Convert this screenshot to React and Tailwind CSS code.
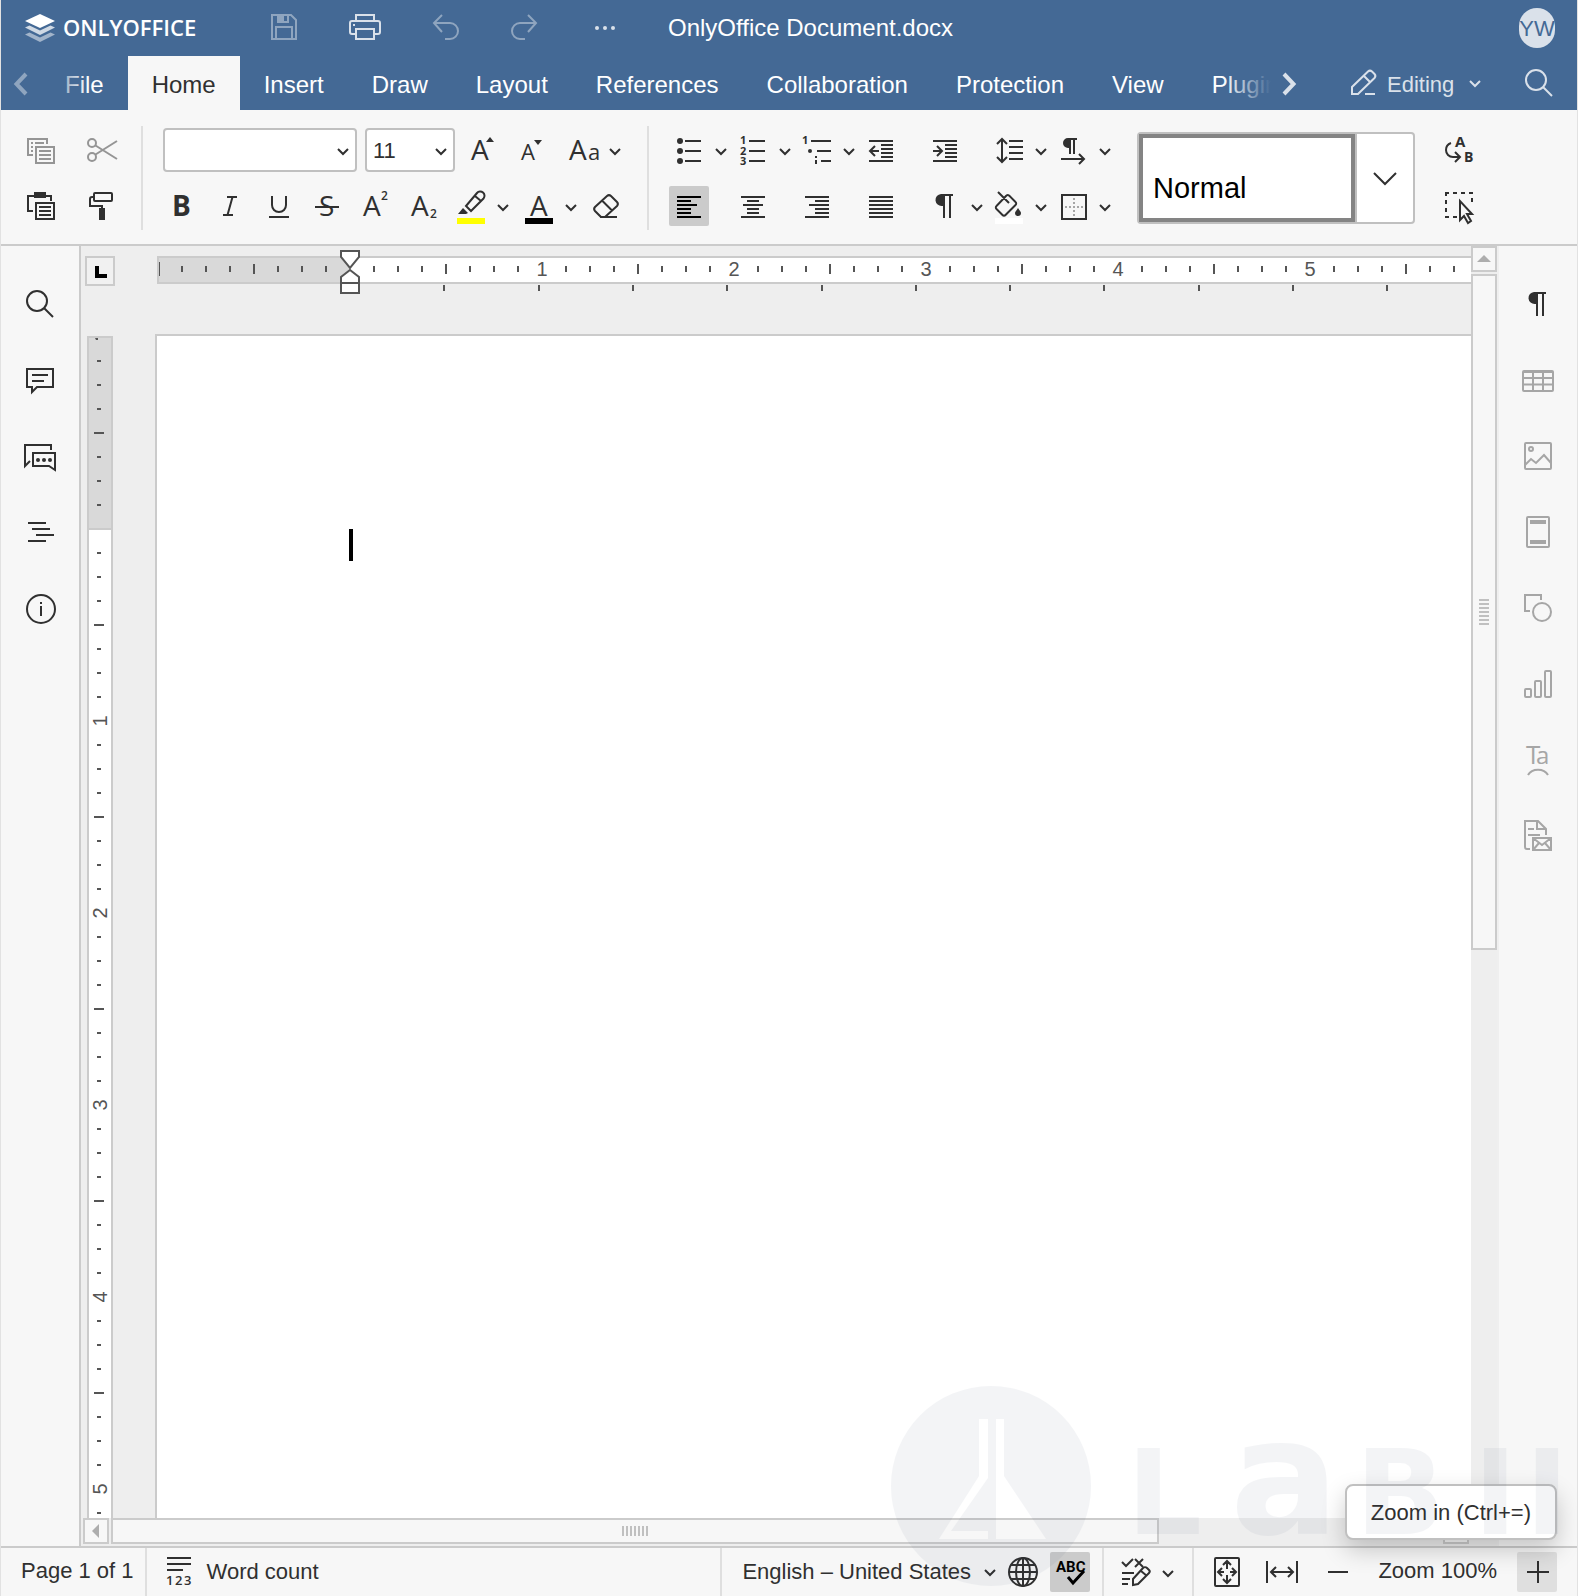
import React from "react";

const Icon = ({ children, className = "" }) => (
  <svg
    viewBox="0 0 40 40"
    className={`size-10 shrink-0 ${className}`}
    fill="none"
    stroke="currentColor"
    strokeWidth="2"
    aria-hidden="true"
  >
    {children}
  </svg>
);

const Glyph = ({ x, y, size, weight = 400, children }) => (
  <text
    x={x}
    y={y}
    fontSize={size}
    fontWeight={weight}
    fontFamily="'Open Sans', sans-serif"
    fill="currentColor"
    stroke="none"
  >
    {children}
  </text>
);

const Caret = ({ className = "" }) => (
  <svg
    viewBox="0 0 24 40"
    className={`h-10 w-6 shrink-0 ${className}`}
    fill="none"
    stroke="currentColor"
    strokeWidth="2"
    aria-hidden="true"
  >
    <path d="M7 19l5 5 5-5" />
  </svg>
);

const ToolButton = ({ label, children, caret, className = "" }) => (
  <button aria-label={label} className={`flex items-center ${className}`}>
    <Icon>{children}</Icon>
    {caret && <Caret />}
  </button>
);

const Lines = ({ rows }) => (
  <path d={rows.map(([x1, x2, y]) => `M${x1} ${y}H${x2}`).join("")} />
);

const Pilcrow = () => (
  <path
    d="M17 8h11v2h-2v22h-2V10h-4v22h-2V20h-1a6 6 0 0 1-1-12z"
    fill="currentColor"
    stroke="none"
  />
);

const SearchShape = () => (
  <>
    <circle cx="17" cy="17" r="10" />
    <path d="M24 24l9 9" />
  </>
);

const tabs = [
  "File",
  "Home",
  "Insert",
  "Draw",
  "Layout",
  "References",
  "Collaboration",
  "Protection",
  "View",
  "Plugins",
];

const Header = () => (
  <header className="bg-[#446995] text-white">
    <div className="flex h-14 items-center">
      <a href="#" className="flex w-[263px] shrink-0 items-center gap-2 pl-6">
        <svg viewBox="0 0 30 28" className="h-7 w-[30px]" aria-hidden="true">
          <path d="M0 20.500l4.500-2L15 23.500l10.500-5 4.500 2L15 28z" fill="#fff" opacity=".5" />
          <path d="M0 13.500l4.500-2L15 16.500l10.500-5 4.500 2L15 21z" fill="#fff" opacity=".75" />
          <path d="M15 0l15 7-15 7L0 7z" fill="#fff" />
        </svg>
        <span className="pb-0.5 font-['Open_Sans'] text-[22px] font-semibold">ONLYOFFICE</span>
      </a>
      <div className="flex items-center gap-10">
        <ToolButton label="Save" className="text-[#8fa5bf]">
          <path d="M8 7h19l5 5v19H8zM12 31V19h16v12M14 7v7h10V7" />
          <path d="M14 7h5v7h-5z" fill="currentColor" />
        </ToolButton>
        <ToolButton label="Print" className="text-[#dae1ea]">
          <path d="M12 13V7h18v6M12 26H8a2 2 0 0 1-2-2V15a2 2 0 0 1 2-2h26a2 2 0 0 1 2 2v9a2 2 0 0 1-2 2h-4" />
          <path d="M12 21h18v10H12zM9 17h2" />
        </ToolButton>
        <ToolButton label="Undo" className="text-[#8fa5bf]">
          <path d="M18 7l-8 8 8 9M10 15h16a8 8 0 0 1 0 16h-5" />
        </ToolButton>
        <ToolButton label="Redo" className="text-[#8fa5bf]">
          <path d="M24 7l8 8-8 9M32 15H16a8 8 0 0 0 0 16h5" />
        </ToolButton>
        <ToolButton label="More" className="text-[#dae1ea]">
          <g fill="currentColor" stroke="none">
            <circle cx="13" cy="20" r="2" />
            <circle cx="21" cy="20" r="2" />
            <circle cx="29" cy="20" r="2" />
          </g>
        </ToolButton>
      </div>
      <h1 className="ml-11 flex-1 text-2xl">OnlyOffice Document.docx</h1>
      <button className="mr-5.5 flex h-10 w-9 items-center justify-center rounded-full bg-[#dae1ea] text-[22px] text-[#446995]">
        YW
      </button>
    </div>

    <div className="flex h-[54px] items-center">
      <button aria-label="Scroll tabs left" className="text-[#8fa5bf]">
        <Icon>
          <path d="M25 11L15.500 21l9.500 10" strokeWidth="4" />
        </Icon>
      </button>
      <nav className="relative flex h-full flex-1 overflow-hidden">
        {tabs.map((tab) => (
          <a
            key={tab}
            href="#"
            className={`flex h-full shrink-0 items-center px-6 pt-1 text-2xl ${
              tab === "Home" ? "bg-[#f7f7f7] text-[#303030]" : ""
            }`}
          >
            {tab}
          </a>
        ))}
        <div className="absolute inset-y-0 left-0 w-12 bg-linear-to-r from-[#446995] to-transparent" />
        <div className="absolute inset-y-0 right-0 w-12 bg-linear-to-l from-[#446995] to-transparent" />
      </nav>
      <button aria-label="Scroll tabs right" className="text-[#dae1ea]">
        <Icon>
          <path d="M13 11l9.500 10L13 31" strokeWidth="4" />
        </Icon>
      </button>
      <div className="ml-8 flex items-center gap-1 text-[#dae1ea]">
        <Icon>
          <path d="M9 31v-7L25 8.500a3 3 0 0 1 4 0l2.500 2.500a3 3 0 0 1 0 4L15 31zM21 13l6 6M22 31h10" />
        </Icon>
        <div className="relative w-25">
          <select
            aria-label="Editing mode"
            className="w-full appearance-none bg-transparent pt-0.5 text-[22px]"
          >
            <option>Editing</option>
          </select>
          <Caret className="pointer-events-none absolute -top-1 right-0" />
        </div>
      </div>
      <button aria-label="Search" className="mr-4.5 ml-8 text-[#dae1ea]">
        <Icon>
          <SearchShape />
        </Icon>
      </button>
    </div>
  </header>
);

const Separator = () => <div className="h-26 w-0.5 shrink-0 bg-[#dfdfdf]" />;

const Combo = ({ label, value, className }) => (
  <div className={`relative ${className}`}>
    <select
      aria-label={label}
      className="h-11 w-full appearance-none rounded-sm border-2 border-[#c0c0c0] bg-white px-1.5 text-[22px]"
    >
      <option>{value}</option>
    </select>
    <Caret className="pointer-events-none absolute top-0.5 right-0.5" />
  </div>
);

const Toolbar = () => (
  <div className="flex items-center gap-5 border-b-2 border-[#cbcbcb] pt-4 pb-3.5 pl-5">
    <div className="grid grid-cols-2 gap-x-5 gap-y-4">
      <ToolButton label="Copy" className="text-[#959595]">
        <path d="M12 25H7V9h19v5M15 17h18v16H15z" />
        <Lines rows={[[10, 12, 13], [14, 23, 13], [10, 12, 17], [10, 12, 21], [18, 30, 21], [18, 30, 25], [18, 30, 29]]} />
      </ToolButton>
      <ToolButton label="Cut" className="text-[#959595]">
        <circle cx="11" cy="13" r="4" />
        <circle cx="11" cy="27" r="4" />
        <path d="M14.500 15.500L36 29M14.500 24.500L36 11" />
      </ToolButton>
      <ToolButton label="Paste">
        <path d="M12 25H7V10h23v5M15 17h18v16H15z" />
        <path d="M13 6h12v6H13z" fill="currentColor" stroke="none" />
        <Lines rows={[[18, 30, 21], [18, 30, 25], [18, 30, 29]]} />
      </ToolButton>
      <ToolButton label="Copy style">
        <rect x="13" y="7" width="18" height="8" rx="1" />
        <path d="M13 11h-2a2 2 0 0 0-2 2v7h12v3" />
        <path d="M18 22h6v12h-6z" fill="currentColor" stroke="none" />
      </ToolButton>
    </div>
    <Separator />
    <div className="flex flex-col gap-4">
      <div className="flex h-10 items-center gap-2">
        <Combo label="Font" value="" className="w-[194px]" />
        <Combo label="Font size" value="11" className="w-[90px]" />
        <ToolButton label="Increment font size">
          <Glyph x="8" y="30" size="28">A</Glyph>
          <path d="M23 12h8l-4-5z" fill="currentColor" stroke="none" />
        </ToolButton>
        <ToolButton label="Decrement font size">
          <Glyph x="10" y="30" size="22">A</Glyph>
          <path d="M23 10h8l-4 5z" fill="currentColor" stroke="none" />
        </ToolButton>
        <ToolButton label="Change case" caret className="ml-1">
          <Glyph x="6" y="30" size="28">A</Glyph>
          <Glyph x="25" y="30" size="22">a</Glyph>
        </ToolButton>
      </div>
      <div className="flex gap-1">
        <div className="mr-1 flex gap-2">
          <ToolButton label="Bold">
            <Glyph x="9" y="30" size="28" weight={700}>B</Glyph>
          </ToolButton>
          <ToolButton label="Italic">
            <path d="M16 11h10M12 29h10M21.500 11l-5 18" />
          </ToolButton>
          <ToolButton label="Underline">
            <path d="M13 10v9c0 4 3 7 7 7s7-3 7-7v-9M10 31h20" />
          </ToolButton>
          <ToolButton label="Strikethrough">
            <Glyph x="12" y="30" size="28">S</Glyph>
            <path d="M8 21h24" />
          </ToolButton>
          <ToolButton label="Superscript">
            <Glyph x="8" y="30" size="28">A</Glyph>
            <Glyph x="26" y="14" size="12" weight={600}>2</Glyph>
          </ToolButton>
          <ToolButton label="Subscript">
            <Glyph x="8" y="30" size="28">A</Glyph>
            <Glyph x="27" y="32" size="12" weight={600}>2</Glyph>
          </ToolButton>
        </div>
        <ToolButton label="Highlight color" caret>
          <path d="M15 20L26 7a4 4 0 0 1 6.500 5.500L20 25zM24 10l6 5" />
          <path d="M12 22l5 5-2 1H7z" fill="currentColor" stroke="none" />
          <path d="M6 32h28v6H6z" fill="#ffff00" stroke="none" />
        </ToolButton>
        <ToolButton label="Font color" caret>
          <Glyph x="11" y="30" size="28">A</Glyph>
          <path d="M6 32h28v6H6z" fill="#000" stroke="none" />
        </ToolButton>
        <ToolButton label="Clear style">
          <path d="M14 31l-6-6a3 3 0 0 1 0-4L20 10a3 3 0 0 1 4 0l6 6a3 3 0 0 1 0 4L18 31zM15 14.500l10 10M13 31h17" />
        </ToolButton>
      </div>
    </div>
    <Separator />
    <div className="grid grid-cols-[repeat(7,64px)] gap-y-4">
      <ToolButton label="Bullets" caret>
        <g fill="currentColor" stroke="none">
          <circle cx="11" cy="11" r="3" />
          <circle cx="11" cy="21" r="3" />
          <circle cx="11" cy="31" r="3" />
        </g>
        <Lines rows={[[16, 32, 11], [16, 32, 21], [16, 32, 31]]} />
      </ToolButton>
      <ToolButton label="Numbering" caret>
        <Glyph x="7" y="14" size="11" weight={700}>1</Glyph>
        <Glyph x="7" y="25" size="11" weight={700}>2</Glyph>
        <Glyph x="7" y="35" size="11" weight={700}>3</Glyph>
        <Lines rows={[[16, 32, 11], [16, 32, 21], [16, 32, 31]]} />
      </ToolButton>
      <ToolButton label="Multilevel list" caret>
        <Glyph x="5" y="14" size="11" weight={700}>1</Glyph>
        <circle cx="13" cy="21" r="2" fill="currentColor" stroke="none" />
        <path d="M19 26v2M19 30v4" />
        <Lines rows={[[14, 34, 11], [20, 34, 21], [24, 34, 31]]} />
      </ToolButton>
      <ToolButton label="Decrease indent">
        <Lines rows={[[8, 32, 11], [20, 32, 15], [20, 32, 19], [20, 32, 23], [20, 32, 27], [8, 32, 31]]} />
        <path d="M9 21h9M14 16l-5 5 5 5" />
      </ToolButton>
      <ToolButton label="Increase indent">
        <Lines rows={[[8, 32, 11], [20, 32, 15], [20, 32, 19], [20, 32, 23], [20, 32, 27], [8, 32, 31]]} />
        <path d="M8 21h9M12 16l5 5-5 5" />
      </ToolButton>
      <ToolButton label="Line spacing" caret>
        <path d="M13 9v23M8 14l5-5 5 5M8 27l5 5 5-5" />
        <Lines rows={[[20, 34, 11], [20, 34, 17], [20, 34, 23], [20, 34, 29]]} />
      </ToolButton>
      <ToolButton label="Text direction" caret>
        <path
          d="M15 8h9v2h-2v14h-2V10h-2v14h-2v-6h-1a5 5 0 0 1 0-10z"
          fill="currentColor"
          stroke="none"
        />
        <path d="M8 29h23M26 24l5 5-5 5" />
      </ToolButton>
      <button aria-label="Align left" className="size-10 rounded-xs bg-[#cbcbcb] text-black">
        <Icon>
          <Lines rows={[[8, 32, 11], [8, 22, 15], [8, 28, 19], [8, 22, 23], [8, 22, 27], [8, 32, 31]]} />
        </Icon>
      </button>
      <ToolButton label="Align center">
        <Lines rows={[[8, 32, 11], [14, 26, 15], [10, 30, 19], [14, 26, 23], [14, 26, 27], [8, 32, 31]]} />
      </ToolButton>
      <ToolButton label="Align right">
        <Lines rows={[[8, 32, 11], [18, 32, 15], [12, 32, 19], [18, 32, 23], [18, 32, 27], [8, 32, 31]]} />
      </ToolButton>
      <ToolButton label="Justify">
        <Lines rows={[[8, 32, 11], [8, 32, 15], [8, 32, 19], [8, 32, 23], [8, 32, 27], [8, 32, 31]]} />
      </ToolButton>
      <ToolButton label="Nonprinting characters" caret>
        <Pilcrow />
      </ToolButton>
      <ToolButton label="Shading" caret>
        <path d="M17 10L7.500 20a2 2 0 0 0 0 3l6 6a2 2 0 0 0 3 0l10-10a2 2 0 0 0 0-3l-6-6a2 2 0 0 0-3.500 0zM9 6l11 11" />
        <path d="M29 22c2 3 3 4 3 5a3 3 0 0 1-6 0c0-1 1-2 3-5z" fill="currentColor" stroke="none" />
        <path d="M6 32h28v6H6z" fill="#fff" stroke="none" />
      </ToolButton>
      <ToolButton label="Borders" caret>
        <rect x="9" y="9" width="24" height="24" />
        <path d="M21 12v18M12 21h18" stroke="#a6a6a6" strokeDasharray="2 2" />
      </ToolButton>
    </div>
    <div className="flex h-23 w-[278px] shrink-0 rounded-sm border-2 border-[#c0c0c0] bg-white">
      <button className="flex flex-1 items-end border-4 border-[#848484] px-2.5 pb-2 text-[29px] text-black">
        Normal
      </button>
      <button
        aria-label="More styles"
        className="flex w-[58px] items-center justify-center border-l-2 border-[#c0c0c0]"
      >
        <Icon>
          <path d="M9 15l11 11 11-11" />
        </Icon>
      </button>
    </div>
    <div className="ml-1 flex flex-col gap-4">
      <ToolButton label="Replace">
        <path d="M12 13c-3 1-5 4-5 7 0 4 3 7 7 7h6M16 22l5 5-5 5" />
        <Glyph x="16" y="17" size="15" weight={700}>A</Glyph>
        <Glyph x="25" y="32" size="14" weight={700}>B</Glyph>
      </ToolButton>
      <ToolButton label="Select">
        <path d="M6 7h28M33 12v4M7 6v26M6 31h12" strokeDasharray="4 4" />
        <path d="M21 15v19l4-4 4 7 3-2-4-7h5z" />
      </ToolButton>
    </div>
  </div>
);

const LeftPanel = () => (
  <aside className="flex w-20 shrink-0 flex-col items-center gap-9 border-r-2 border-[#cbcbcb] pt-[38px]">
    <ToolButton label="Find">
      <SearchShape />
    </ToolButton>
    <ToolButton label="Comments">
      <path d="M7 9h26v18H17l-5 5v-5H7zM12 15h16M12 21h12" />
    </ToolButton>
    <ToolButton label="Chat">
      <path d="M10 25l-5 5V9h26v5M13 17h22v17l-6-4H13z" />
      <g fill="currentColor" stroke="none">
        <circle cx="18" cy="24" r="2" />
        <circle cx="24" cy="24" r="2" />
        <circle cx="30" cy="24" r="2" />
      </g>
    </ToolButton>
    <ToolButton label="Headings">
      <Lines rows={[[8, 26, 11], [12, 30, 17], [16, 34, 23], [8, 26, 29]]} />
    </ToolButton>
    <ToolButton label="About">
      <circle cx="21" cy="21" r="14" />
      <path d="M21 18v10M21 14v2" />
    </ToolButton>
  </aside>
);

const RightPanel = () => (
  <aside className="flex w-20 shrink-0 flex-col items-center gap-9 border-l-2 border-[#efefef] pt-[38px] text-[#a6a6a6]">
    <ToolButton label="Paragraph settings" className="text-[#303030]">
      <Pilcrow />
    </ToolButton>
    <ToolButton label="Table settings">
      <rect x="5" y="11" width="30" height="20" rx="1" />
      <path d="M5 12h30M5 18h30M5 24.500h30M15 12v19M25 12v19" />
    </ToolButton>
    <ToolButton label="Image settings">
      <rect x="7" y="7" width="26" height="26" rx="1" />
      <circle cx="13" cy="13" r="2" />
      <path d="M7 29l6-6 5 4 8-8 7 8" />
    </ToolButton>
    <ToolButton label="Header and footer settings">
      <rect x="9" y="5" width="22" height="30" rx="1" />
      <path d="M12 10h16M12 30h16" strokeWidth="4" />
    </ToolButton>
    <ToolButton label="Shape settings">
      <path d="M12 23H7V7h16v5" />
      <circle cx="24" cy="24" r="9" />
    </ToolButton>
    <ToolButton label="Chart settings">
      <rect x="7" y="25" width="6" height="8" rx="1" />
      <rect x="17" y="17" width="6" height="16" rx="1" />
      <rect x="27" y="7" width="6" height="26" rx="1" />
    </ToolButton>
    <ToolButton label="Text Art settings">
      <Glyph x="8" y="24" size="26">T</Glyph>
      <Glyph x="18" y="24" size="24">a</Glyph>
      <path d="M10 35c4-7 16-7 20 0" />
    </ToolButton>
    <ToolButton label="Mail merge settings">
      <path d="M12 33H9a2 2 0 0 1-2-2V5h13l8 8v6M19 5v8h8M10 13h6M10 19h12" />
      <path d="M15 22h18v12H15zM15 22l9 7 9-7M15 34l6-7M33 34l-6-7" />
    </ToolButton>
  </aside>
);

// one inch is 192px, one tick every 1/8 inch
const INCH = 192;
const TICK = 24;
const makeTicks = (count) => Array.from({ length: count + 7 }, (_, i) => i - 7);
const pageWidthTicks = makeTicks(60);
const pageHeightTicks = makeTicks(80);
const tabStops = [1, 2, 3, 4, 5, 6, 7, 8, 9, 10, 11, 12, 13, 14];

const HorizontalRuler = () => (
  <svg className="h-12 w-full" aria-hidden="true">
    <rect x="0" y="10" width="100%" height="28" fill="#cbcbcb" />
    <rect x="2" y="12" width="100%" height="24" fill="#fff" />
    <rect x="2" y="12" width="191" height="24" fill="#d9d9d9" />
    <path d="M2 16h1v14H2z" fill="#555" />
    <g transform="translate(193 0)">
      {pageWidthTicks.map((i) => {
        const x = i * TICK;
        if (i === 0) return null;
        if (i > 0 && i % 8 === 0) {
          return (
            <text key={i} x={x} y="30" fontSize="20" textAnchor="middle" fill="#555">
              {x / INCH}
            </text>
          );
        }
        const half = i % 4 === 0 ? 5 : 3;
        return <path key={i} d={`M${x} ${23 - half}v${half * 2}`} stroke="#555" strokeWidth="2" />;
      })}
      {tabStops.map((i) => (
        <path key={i} d={`M${Math.round(i * 94.3)} 39v6`} stroke="#555" strokeWidth="2" />
      ))}
      <g fill="#fff" stroke="#555" strokeWidth="2">
        <path d="M-9 5H9v6L0 22l-9-11z" />
        <path d="M-9 37v-6L0 24l9 7v6z" />
        <path d="M-9 37H9v10H-9z" />
      </g>
    </g>
  </svg>
);

const VerticalRuler = () => (
  <svg className="h-full w-[26px]" aria-hidden="true">
    <rect width="26" height="100%" fill="#cbcbcb" />
    <rect x="2" y="2" width="22" height="100%" fill="#fff" />
    <rect x="2" y="2" width="22" height="190" fill="#d9d9d9" />
    <path d="M2 193h22" stroke="#cbcbcb" strokeWidth="2" />
    <path d="M8 2h3v2H9z" fill="#555" />
    <g transform="translate(0 193)">
      {pageHeightTicks.map((i) => {
        const y = i * TICK;
        if (i === 0) return null;
        if (i > 0 && i % 8 === 0) {
          return (
            <text
              key={i}
              transform={`translate(20 ${y}) rotate(-90)`}
              fontSize="20"
              textAnchor="middle"
              fill="#555"
            >
              {y / INCH}
            </text>
          );
        }
        const half = i % 4 === 0 ? 5 : 2;
        return <path key={i} d={`M${12 - half} ${y}h${half * 2}`} stroke="#555" strokeWidth="2" />;
      })}
    </g>
  </svg>
);

const ScrollArrow = ({ label, d }) => (
  <button
    aria-label={label}
    className="flex size-[26px] shrink-0 items-center justify-center border-2 border-[#cbcbcb] bg-[#f7f7f7]"
  >
    <svg viewBox="0 0 14 14" className="size-3.5" fill="#adadad" aria-hidden="true">
      <path d={d} />
    </svg>
  </button>
);

const Editor = () => (
  <main className="grid min-w-0 flex-1 grid-cols-[34px_1fr_26px] grid-rows-[88px_1fr_28px] bg-[#eee]">
    <div className="pt-2.5 pl-1">
      <button
        aria-label="Tab type"
        className="flex size-[30px] items-center justify-center border-2 border-[#cbcbcb] bg-[#f1f1f1]"
      >
        <svg viewBox="0 0 14 14" className="size-3.5" aria-hidden="true">
          <path d="M2 2h4v8h8v4H2z" />
        </svg>
      </button>
    </div>
    <div className="min-w-0 pl-[42px]">
      <HorizontalRuler />
    </div>
    <div className="row-span-2 flex flex-col gap-0.5">
      <ScrollArrow label="Scroll up" d="M7 3l7 7H0z" />
      <div className="flex-1">
        <div className="flex h-5/9 flex-col items-center justify-center gap-0.5 border-2 border-[#cbcbcb] bg-[#f7f7f7]">
          {[0, 1, 2, 3, 4, 5, 6].map((i) => (
            <span key={i} className="h-0.5 w-2.5 bg-[#c0c0c0]" />
          ))}
        </div>
      </div>
      <ScrollArrow label="Scroll down" d="M7 11L0 4h14z" />
    </div>
    <div className="min-h-0 pt-0.5 pl-1.5">
      <VerticalRuler />
    </div>
    <div className="min-w-0 pl-10">
      <div className="h-full border-t-2 border-l-2 border-[#cbcbcb] bg-white pt-[193px] pl-48">
        <div className="h-8 w-1 bg-black" />
      </div>
    </div>
    <div className="col-span-3 flex gap-0.5 pr-7 pb-0.5 pl-0.5">
      <ScrollArrow label="Scroll left" d="M3 7l7-7v14z" />
      <div className="flex-1 pr-1">
        <div className="flex h-[26px] w-[79%] items-center justify-center gap-0.5 border-2 border-[#cbcbcb] bg-[#f7f7f7]">
          {[0, 1, 2, 3, 4, 5, 6].map((i) => (
            <span key={i} className="h-2.5 w-0.5 bg-[#c0c0c0]" />
          ))}
        </div>
      </div>
      <ScrollArrow label="Scroll right" d="M11 7L4 0v14z" />
    </div>
  </main>
);

const StatusSeparator = () => <div className="h-full w-0.5 shrink-0 bg-[#dfdfdf]" />;

const StatusBar = () => (
  <footer className="flex h-[50px] items-center border-t-2 border-[#cbcbcb] text-[22px]">
    <button className="pr-[11px] pb-1 pl-5">Page 1 of 1</button>
    <StatusSeparator />
    <button className="ml-3 flex items-center gap-2">
      <Icon>
        <Lines rows={[[8, 32, 6], [8, 32, 12], [8, 24, 18]]} />
        <Glyph x="7" y="33" size="13" weight={600}>1</Glyph>
        <Glyph x="16" y="33" size="13" weight={600}>2</Glyph>
        <Glyph x="25" y="33" size="13" weight={600}>3</Glyph>
      </Icon>
      <span className="pb-0.5">Word count</span>
    </button>
    <div className="flex-1" />
    <StatusSeparator />
    <div className="relative ml-5 w-65">
      <select aria-label="Document language" className="w-full appearance-none bg-transparent pb-0.5">
        <option>English – United States</option>
      </select>
      <Caret className="pointer-events-none absolute -top-1 right-0" />
    </div>
    <ToolButton label="Set document language">
      <circle cx="21" cy="20" r="14" />
      <ellipse cx="21" cy="20" rx="7" ry="14" />
      <path d="M21 6v28M7 20h28M9 13h24M9 27h24" />
    </ToolButton>
    <button aria-label="Spell checking" className="mr-3 ml-2 size-10 rounded-xs bg-[#cbcbcb] text-black">
      <Icon>
        <text x="6" y="20" fontSize="15" fontWeight="700" fontFamily="Roboto, sans-serif" fill="currentColor" stroke="none">
          ABC
        </text>
        <path d="M18 25l5 6 11-12" strokeWidth="3" />
      </Icon>
    </button>
    <StatusSeparator />
    <ToolButton label="Track changes" caret className="mx-3">
      <path d="M6 10l4 4 7-7M19 7l8 8M27 7l-8 8" />
      <path d="M17 33v-6l10-11c1-1 3-1 4 0l2 2c1 1 1 2 0 3L22 32zM25 19l6 5" />
      <Lines rows={[[6, 18, 21], [6, 14, 27], [6, 12, 32]]} />
    </ToolButton>
    <StatusSeparator />
    <div className="ml-3 flex gap-4">
      <ToolButton label="Fit to page">
        <rect x="9" y="6" width="24" height="28" rx="1" />
        <path d="M21 9v8M17 13l4-4 4 4M21 31v-8M17 27l4 4 4-4M12 20h6M16 16l-4 4 4 4M30 20h-6M26 16l4 4-4 4" />
      </ToolButton>
      <ToolButton label="Fit to width">
        <path d="M5 9v22M35 9v22M9 20h22M14 15l-5 5 5 5M26 15l5 5-5 5" />
      </ToolButton>
      <ToolButton label="Zoom out">
        <path d="M10 20h20" />
      </ToolButton>
    </div>
    <button className="px-5 pb-1">Zoom 100%</button>
    <div className="relative mr-5">
      <button
        aria-label="Zoom in"
        aria-describedby="zoom-in-tip"
        className="block size-10 rounded-xs bg-[#dfdfdf]"
      >
        <Icon>
          <path d="M21 9v22M10 20h22" />
        </Icon>
      </button>
      <div
        id="zoom-in-tip"
        role="tooltip"
        className="absolute right-0 bottom-[52px] flex h-14 items-center rounded-lg border-2 border-[#c0c0c0] bg-white px-6 whitespace-nowrap shadow-[0_10px_24px_rgba(0,0,0,0.2)]"
      >
        Zoom in (Ctrl+=)
      </div>
    </div>
  </footer>
);

const Watermark = () => (
  <div
    aria-hidden="true"
    className="pointer-events-none absolute right-2 bottom-2.5 flex items-center text-[#283c64] opacity-5"
  >
    <svg viewBox="0 0 200 200" className="size-50 shrink-0" fill="currentColor">
      <path
        fillRule="evenodd"
        d="M100 0a100 100 0 1 1 0 200a100 100 0 1 1 0-200zM88 33h9v59L60 145h37v8H48L88 90zM105 33h8v57l42 63h-50z"
      />
    </svg>
    <div className="ml-9 flex items-baseline pb-4 font-['DejaVu_Sans'] text-[118px] leading-none font-bold">
      <span>L</span>
      <span className="ml-7 text-[162px] leading-none">a</span>
      <span className="ml-4">B</span>
      <span className="ml-7">I</span>
      <span className="ml-2">I</span>
    </div>
  </div>
);

const App = () => {
  return (
    <div className="relative flex h-screen flex-col overflow-hidden border-x border-[#e2e2e2] bg-[#f7f7f7] font-['Liberation_Sans',Arial,sans-serif] text-[#303030]">
      <Header />
      <Toolbar />
      <div className="flex min-h-0 flex-1">
        <LeftPanel />
        <Editor />
        <RightPanel />
      </div>
      <StatusBar />
      <Watermark />
    </div>
  );
};

export default App;
